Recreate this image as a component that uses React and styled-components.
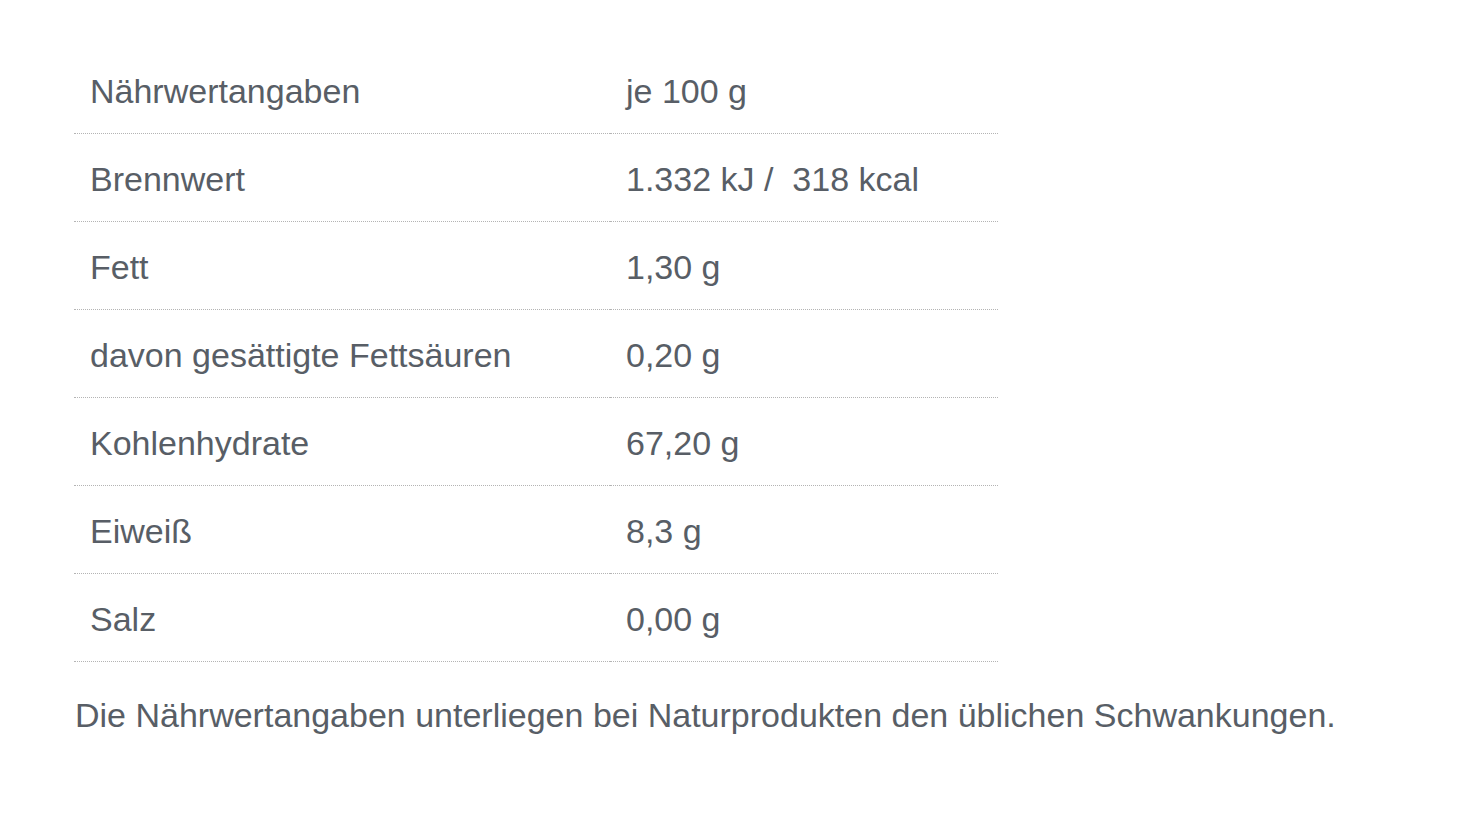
import styled, { createGlobalStyle } from "styled-components";

const GlobalStyle = createGlobalStyle`
  html, body {
    margin: 0;
    padding: 0;
    background: #fff;
  }
  body {
    font-family: "Liberation Sans", Arial, sans-serif;
    color: #585e66;
  }
`;

const Page = styled.div`
  padding: 46px 0 0 74px;
`;

const Table = styled.div`
  display: grid;
  grid-template-columns: 536px 388px;
  width: 924px;
`;

const Cell = styled.div`
  height: 88px;
  box-sizing: border-box;
  padding: 3px 0 0 16px;
  display: flex;
  align-items: center;
  font-size: 34px;
  border-bottom: 1px dotted #b4b4b4;
  white-space: pre;
`;

const Note = styled.p`
  margin: 34px 0 0 1px;
  font-size: 34px;
  line-height: 39px;
`;

const rows = [
  ["Nährwertangaben", "je 100 g"],
  ["Brennwert", "1.332 kJ /  318 kcal"],
  ["Fett", "1,30 g"],
  ["davon gesättigte Fettsäuren", "0,20 g"],
  ["Kohlenhydrate", "67,20 g"],
  ["Eiweiß", "8,3 g"],
  ["Salz", "0,00 g"],
];

export default function App() {
  return (
    <>
      <GlobalStyle />
      <Page>
        <Table>
          {rows.flatMap(([label, value]) => [
            <Cell key={label}>{label}</Cell>,
            <Cell key={label + "-v"}>{value}</Cell>,
          ])}
        </Table>
        <Note>
          Die Nährwertangaben unterliegen bei Naturprodukten den üblichen Schwankungen.
        </Note>
      </Page>
    </>
  );
}
